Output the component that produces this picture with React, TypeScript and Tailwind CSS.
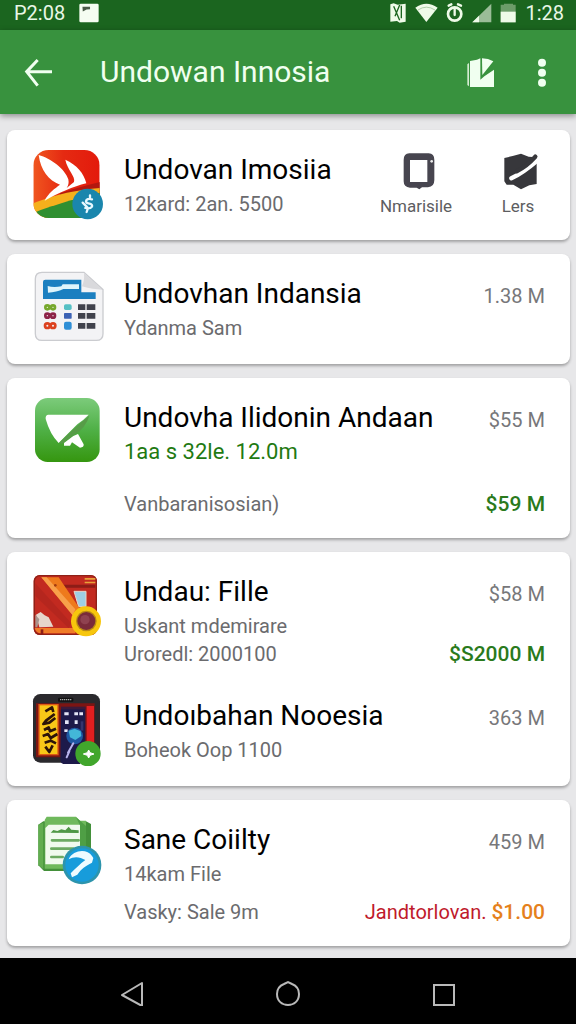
import type { ReactNode } from "react";

// app icons
const BirdIcon = () => (
  <svg viewBox="96 78 216 222" className="h-[74px] w-[72px]">
    <defs>
      <linearGradient id="bird" x1="0" x2="1">
        <stop offset="0" stopColor="#f0561f" />
        <stop offset="0.45" stopColor="#e52a12" />
        <stop offset="1" stopColor="#e31a0c" />
      </linearGradient>
      <clipPath id="birdClip">
        <rect x="100" y="90" width="199" height="204" rx="46" />
      </clipPath>
    </defs>
    <g clipPath="url(#birdClip)">
      <rect x="100" y="90" width="199" height="204" fill="url(#bird)" />
      <path d="M180 220C220 206 260 196 300 186V300H180Z" fill="#b3180f" />
      <path d="M100 250C160 226 210 212 300 204V300H100Z" fill="#f5b01c" />
      <path d="M100 278C160 256 210 240 300 218V300H100Z" fill="#2f8f31" />
    </g>
    <path
      d="M116 105C152 114 196 148 205 178Q208 194 200 204L222 186C228 170 202 150 196 119C230 134 252 160 259 190C220 200 176 218 134 242C144 220 166 204 180 194C146 182 122 150 116 105Z"
      fill="#fff"
    />
    <circle cx="263" cy="252" r="46" fill="#1a86ad" />
    <path
      d="M270 226V236M276 238Q260 234 258 244Q258 250 268 251Q278 253 276 260Q270 268 256 264M248 248L262 262M264 264L260 276"
      fill="none"
      stroke="#e8f8ff"
      strokeWidth="7"
      strokeLinecap="round"
    />
  </svg>
);

const SheetIcon = () => (
  <svg viewBox="96 75 216 222" className="h-[74px] w-[72px]">
    <path
      d="M126 82H252L309 134V266Q309 286 289 286H126Q106 286 106 266V102Q106 82 126 82Z"
      fill="#f3f3f5"
      stroke="#cbccd0"
      strokeWidth="4"
    />
    <path d="M252 84L307 134Q280 134 246 124Q254 106 252 84Z" fill="#d9d9dc" />
    <path d="M136 104H244V142H287V162H129V111Q129 104 136 104Z" fill="#1b7fc0" />
    <path d="M143 123Q160 128 184 124L188 118H237V132H190Q170 142 144 143Z" fill="#dff4fb" />
    <g fill="none" strokeWidth="8">
      <g stroke="#76a82d">
        <circle cx="142" cy="187" r="6" />
        <circle cx="159" cy="187" r="6" />
      </g>
      <g stroke="#8d2348">
        <circle cx="142" cy="212" r="6" />
        <circle cx="159" cy="212" r="6" />
      </g>
      <g stroke="#dc421f">
        <circle cx="142" cy="242" r="7" />
        <circle cx="159" cy="242" r="7" />
      </g>
    </g>
    <rect x="192" y="178" width="23" height="17" rx="5" fill="#55c0c4" />
    <rect x="192" y="204" width="23" height="17" rx="2" fill="#3c62b4" />
    <rect x="192" y="230" width="23" height="24" rx="6" fill="#2f8fd6" />
    <g fill="#40424c">
      <path d="M234 178H256V195H234ZM260 178H286V195H260Z" />
      <path d="M234 204H256V221H234ZM260 204H286V221H260Z" />
      <path d="M234 234H256V251H234ZM260 234H286V251H260Z" />
    </g>
  </svg>
);

const KiteIcon = () => (
  <svg viewBox="96 57 216 222" className="h-[74px] w-[72px]">
    <defs>
      <linearGradient id="kite" x1="0" y1="0" x2="0" y2="1">
        <stop offset="0" stopColor="#7ccb7b" />
        <stop offset="0.5" stopColor="#4fb046" />
        <stop offset="1" stopColor="#35960f" />
      </linearGradient>
    </defs>
    <rect x="105" y="69" width="194" height="192" rx="38" fill="url(#kite)" />
    <path d="M144 119H266Q252 134 232 148L176 204Q150 178 137 132Q136 120 144 119Z" fill="#fff" />
    <path d="M268 122Q258 158 222 180L186 206L178 204Q224 156 268 122Z" fill="#579c48" />
    <path d="M192 204L220 183L234 177L251 208Q252 218 240 218L216 202L210 212H192Z" fill="#fff" />
  </svg>
);

const FolderIcon = () => (
  <svg viewBox="96 66 216 222" className="h-[74px] w-[72px]">
    <rect x="101" y="87" width="190" height="180" rx="18" fill="#c22a20" />
    <rect x="103" y="89" width="186" height="176" rx="17" fill="none" stroke="#8f2117" strokeWidth="4" />
    <path d="M188 116H286V125H192Z" fill="#8d1d17" />
    <path d="M254 96H286V101H254ZM254 107H286V112H254Z" fill="#e8a23a" />
    <path d="M222 136H258V182H236Z" fill="#9fcfe4" stroke="#e8d7c8" strokeWidth="3" />
    <path d="M106 112L214 232L206 246L106 150Z" fill="#b5261e" />
    <path d="M124 94H176L238 186L218 208Z" fill="#ee7a1c" />
    <path d="M124 94H140L226 190L218 208Z" fill="#f8a04a" />
    <circle cx="166" cy="118" r="4" fill="#a33c10" />
    <path d="M108 206L122 198L134 208L146 214L160 242L118 244Z" fill="#e6d6cc" />
    <path d="M106 206L118 220L112 244H106Z" fill="#a8938c" />
    <path d="M104 246H226V262H124Q108 262 104 246Z" fill="#f07c28" />
    <path d="M122 250H130V267H122Z" fill="#8d1d17" />
    <circle cx="258" cy="226" r="45" fill="#f7c60d" />
    <circle cx="259" cy="225" r="31" fill="#b98a14" />
    <circle cx="259" cy="225" r="27" fill="#7a2b3a" />
    <circle cx="255" cy="221" r="14" fill="#8f4250" />
  </svg>
);

const TabletIcon = () => (
  <svg viewBox="96 54 216 222" className="h-[74px] w-[72px]">
    <rect x="99" y="60" width="201" height="206" rx="22" fill="#2a292d" />
    <rect x="174" y="71" width="46" height="12" rx="3" fill="#111" />
    <path d="M180 77H214" stroke="#aaa" strokeWidth="4" strokeDasharray="4 2" />
    <path d="M108 88H284V250H108Z" fill="#7c1513" />
    <path d="M260 96H282V220H260Z" fill="#e11f20" />
    <rect x="117" y="92" width="57" height="150" fill="#f8c718" stroke="#df5a13" strokeWidth="4" />
    <path
      d="M136 112L156 100L160 114M164 120L138 140L130 150L148 146L166 132M132 168L146 160L150 172L168 164M128 186L144 180L152 192L172 180M134 206L152 200L168 208M136 218L148 234L158 214"
      fill="none"
      stroke="#2c1409"
      strokeWidth="8"
      strokeLinejoin="round"
    />
    <path d="M183 100H256V236L240 270H190Q181 268 181 256Z" fill="#1d1a4a" />
    <path d="M183 98H256V106H183Z" fill="#3b1a3a" />
    <g fill="#e4e6f6">
      <path d="M193 115H206V124H193ZM223 115H234V124H223ZM238 115H249V124H238Z" />
      <path d="M195 139H206V150H195ZM224 139H233V150H224Z" />
      <path d="M193 166H203V174H193Z" />
    </g>
    <path d="M242 142H250V170H242Z" fill="#35356d" />
    <circle cx="224" cy="186" r="25" fill="#1f58a3" />
    <path d="M206 170L224 164L242 172L244 186L226 198L210 190Z" fill="#43b7d8" />
    <path d="M220 208L204 236M208 232L200 250" stroke="#b8b4ee" strokeWidth="6" strokeLinecap="round" />
    <circle cx="264" cy="239" r="38" fill="#41a62c" />
    <path d="M266 228L270 236L282 240L270 244L266 252L262 244L250 240L262 236Z" fill="#fff" stroke="#fff" strokeWidth="3" />
  </svg>
);

const NotesIcon = () => (
  <svg viewBox="96 66 216 222" className="h-[74px] w-[72px]">
    <path d="M130 82H258L273 90V216L258 231H132L115 214V92Z" fill="#43903a" />
    <path d="M140 68H228L240 80H258V224H134V78Z" fill="#6fb95c" />
    <path d="M115 92L130 86V226L115 212Z" fill="#62ad50" />
    <path d="M146 92H240V211H136V102Z" fill="#f0faee" />
    <path d="M228 70L242 82L258 96V180L240 160V94Z" fill="#4f9f45" />
    <path d="M152 116L160 108L172 111L184 106L196 109L206 98L214 107L236 109V117Z" fill="#4f9846" />
    <path d="M156 139H236M154 164H220M154 189H188" stroke="#6caa62" strokeWidth="8" strokeLinecap="round" />
    <circle cx="246" cy="213" r="58" fill="#2d94ac" />
    <circle cx="246" cy="213" r="50" fill="#179cdb" />
    <path d="M206 196C220 166 262 164 276 186L280 192L276 206C256 216 244 224 232 242L216 250L212 238C226 224 240 210 256 198C240 188 222 186 206 196Z" fill="#effbff" />
  </svg>
);

type RowProps = {
  icon: ReactNode;
  title: string;
  value?: string;
  children: ReactNode;
};

function Row({ icon, title, value, children }: RowProps) {
  return (
    <div className="flex items-start gap-5">
      <div className="shrink-0">{icon}</div>
      <div className="min-w-0 flex-1 pt-1.5">
        <div className="mb-0.5 flex items-baseline justify-between">
          <h2 className="text-[28px] leading-9 text-black">{title}</h2>
          {value && <span className="text-xl leading-7 text-[#77777a]">{value}</span>}
        </div>
        {children}
      </div>
    </div>
  );
}

function Card({ children }: { children: ReactNode }) {
  return (
    <article className="rounded-lg bg-white px-[25px] pt-4 pb-5 shadow-[0_2px_3px_rgba(0,0,0,0.3)]">
      {children}
    </article>
  );
}

function StatusBar() {
  return (
    <div className="flex h-[30px] items-center bg-[#1b651f] pr-3 pb-1 pl-3.5 text-xl text-[#e9f7e6]">
      <span>P2:08</span>
      <svg viewBox="240 10 58 58" className="ml-3.5 h-5 w-5">
        <rect x="241" y="12" width="56" height="54" rx="4" fill="#f5fdf2" />
        <path d="M250 21H272V28L262 29L251 35Z" fill="#4a5a48" />
      </svg>
      <div className="ml-auto flex items-center gap-2">
        <svg viewBox="304 8 54 60" className="h-5 w-[18px]">
          <path d="M308 12L318 9L330 13L354 10V64L336 67L328 62L308 64Z" fill="#effbe9" />
          <path d="M318 18L336 60M336 14L322 48M341 16V54" stroke="#1b651f" strokeWidth="4" />
        </svg>
        <svg viewBox="384 8 69 60" className="h-5 w-[23px]">
          <path d="M385 22Q418 -2 452 22L418 65Z" fill="#effbe9" />
          <path d="M393 29Q418 12 444 29" fill="none" stroke="#8fb889" strokeWidth="2" />
        </svg>
        <svg viewBox="476 8 54 60" className="h-5 w-[18px]" fill="none" stroke="#effbe9" strokeLinecap="round">
          <circle cx="502" cy="41" r="20" strokeWidth="8" />
          <path d="M484 16L492 12M512 12L521 16" strokeWidth="7" />
          <path d="M502 26V44" strokeWidth="7" />
        </svg>
        <svg viewBox="545 8 60 60" className="h-5 w-5">
          <path d="M603 10V66H546Z" fill="#9bbd98" />
          <path d="M566 46V66H546Z" fill="#effbe9" />
        </svg>
        <svg viewBox="632 8 51 60" className="h-5 w-[17px]">
          <path d="M634 13H644V10H671V13H679V66H634Z" fill="#6c9c69" />
          <path d="M634 34H679V66H634Z" fill="#effbe9" />
        </svg>
        <span>1:28</span>
      </div>
    </div>
  );
}

function AppBar() {
  return (
    <header className="flex h-[84px] items-center bg-[#38923e] pr-[22px] pl-6 shadow-[0_2px_6px_rgba(0,0,0,0.4)]">
      <button aria-label="Back">
        <svg viewBox="72 168 90 90" className="h-[30px] w-[30px]" fill="none" stroke="#f0fff0" strokeWidth="9">
          <path d="M156 212H82M113 177L80 212L113 254" />
        </svg>
      </button>
      <h1 className="ml-[46px] flex-1 text-[30px] leading-9 text-[#f0fff0]">Undowan Innosia</h1>
      <button aria-label="Share">
        <svg viewBox="507 168 90 93" className="h-[31px] w-[30px]">
          <path d="M511 190L516 186V256L511 252Z" fill="#d5ecd2" />
          <path d="M519 180L540 176L550 172V236L562 226L591 206V258H519Z" fill="#f0fff0" />
          <path d="M555 172Q574 172 589 181L556 222Z" fill="#f0fff0" />
        </svg>
      </button>
      <button aria-label="More options" className="ml-10">
        <svg viewBox="744 168 54 93" className="h-[31px] w-[18px]" fill="#f0fff0">
          <circle cx="762" cy="185" r="12" />
          <circle cx="762" cy="215" r="12" />
          <circle cx="762" cy="245" r="12" />
        </svg>
      </button>
    </header>
  );
}

export default function App() {
  return (
    <div className="flex min-h-screen flex-col bg-[#e7e7e9] font-['Roboto',sans-serif]">
      <StatusBar />
      <AppBar />

      <main className="flex flex-col gap-3.5 pt-4 pr-1.5 pb-3 pl-[7px] text-xl leading-7 text-[#6b6b6e]">
        <Card>
          <div className="flex items-start justify-between">
            <Row icon={<BirdIcon />} title="Undovan Imosiia">
              <p>12kard: 2an. 5500</p>
            </Row>
            <div className="-mr-6 flex pt-1.5 text-[17px] leading-7 text-[#5d5d61]">
              <button className="flex w-[102px] flex-col items-center gap-0.5">
                <svg viewBox="183 96 108 114" className="ml-1.5 h-[38px] w-9">
                  <path
                    d="M208 100H266Q283 100 283 120V180Q283 200 264 202H246L238 208L230 203H210Q191 202 191 184V120Q191 100 208 100ZM210 120V186H262V120Z"
                    fill="#47454f"
                    fillRule="evenodd"
                  />
                  <circle cx="275" cy="124" r="4" fill="#eee" />
                </svg>
                Nmarisile
              </button>
              <button className="flex w-[102px] flex-col items-center gap-0.5">
                <svg viewBox="489 96 108 114" className="ml-1.5 h-[38px] w-9">
                  <path d="M493 114L518 108L543 101L566 110L590 112V192L568 196L543 208L520 194L500 194L493 184Z" fill="#37373b" />
                  <path d="M514 175Q550 158 596 118" fill="none" stroke="#fff" strokeWidth="13" strokeLinecap="round" />
                  <path d="M530 154Q562 138 586 110" fill="none" stroke="#37373b" strokeWidth="13" strokeLinecap="round" />
                </svg>
                Lers
              </button>
            </div>
          </div>
        </Card>

        <Card>
          <Row icon={<SheetIcon />} title="Undovhan Indansia" value="1.38 M">
            <p>Ydanma Sam</p>
          </Row>
        </Card>

        <Card>
          <Row icon={<KiteIcon />} title="Undovha Ilidonin Andaan" value="$55 M">
            <p className="text-[22px] text-[#1f7a12]">1aa s 32le. 12.0m</p>
            <div className="mt-6 flex items-baseline justify-between">
              <p>Vanbaranisosian)</p>
              <span className="text-[21px] font-medium text-[#2a7a1c]">$59 M</span>
            </div>
          </Row>
        </Card>

        <Card>
          <Row icon={<FolderIcon />} title="Undau: Fille" value="$58 M">
            <p>Uskant mdemirare</p>
            <div className="flex items-baseline justify-between">
              <p>Uroredl: 2000100</p>
              <span className="text-[21px] font-medium text-[#2a7a1c]">$S2000 M</span>
            </div>
          </Row>
          <div className="mt-6">
            <Row icon={<TabletIcon />} title="Undoıbahan Nooesia" value="363 M">
              <p>Boheok Oop 1100</p>
            </Row>
          </div>
        </Card>

        <Card>
          <Row icon={<NotesIcon />} title="Sane Coiilty" value="459 M">
            <p>14kam File</p>
            <div className="mt-2.5 flex items-baseline justify-between">
              <p>Vasky: Sale 9m</p>
              <p className="text-[#c01a2c]">
                Jandtorlovan.{" "}
                <span className="text-[21px] font-medium text-[#e5811c]">$1.00</span>
              </p>
            </div>
          </Row>
        </Card>
      </main>

      <nav className="mt-auto bg-black py-[18px]">
        <div className="mx-auto grid w-[81%] grid-cols-3 justify-items-center">
          <button aria-label="Back">
            <svg viewBox="0 0 30 30" className="h-[30px] w-[30px]" fill="none" stroke="#b9b9b9" strokeWidth="2">
              <path d="M25 7V30L5 19Z" strokeLinejoin="round" />
            </svg>
          </button>
          <button aria-label="Home">
            <svg viewBox="0 0 30 30" className="h-[30px] w-[30px]" fill="none" stroke="#b9b9b9" strokeWidth="2">
              <path d="M11 8L15 6L19 8C24 10 26 14 26 18C26 25 21 29 15 29C9 29 4 25 4 18C4 14 6 10 11 8Z" />
            </svg>
          </button>
          <button aria-label="Recent apps">
            <svg viewBox="0 0 30 30" className="h-[30px] w-[30px]" fill="none" stroke="#b9b9b9" strokeWidth="2">
              <rect x="5" y="9" width="20" height="20" />
            </svg>
          </button>
        </div>
      </nav>
    </div>
  );
}
